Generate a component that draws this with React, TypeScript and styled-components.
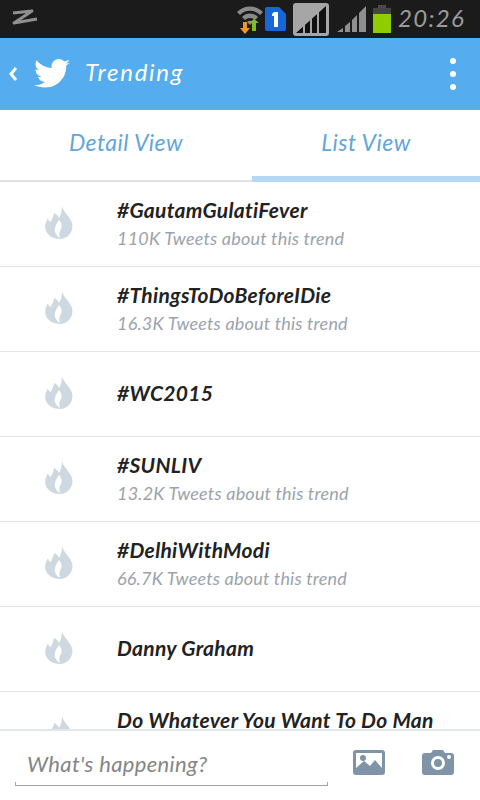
import React from 'react';
import styled, { createGlobalStyle } from 'styled-components';

const GlobalStyle = createGlobalStyle`
  html, body {
    margin: 0;
    padding: 0;
    background: #fff;
  }
  * {
    box-sizing: border-box;
  }
`;

const HAND = `"Lato", "Noto Sans", sans-serif`;

const Screen = styled.div`
  width: 480px;
  height: 800px;
  display: flex;
  flex-direction: column;
  overflow: hidden;
  background: #fff;
  font-family: ${HAND};
  font-style: italic;
`;

const StatusBar = styled.div`
  height: 38px;
  flex: none;
  display: flex;
  align-items: center;
  padding: 0 15px 0 10px;
  background: #1b1b1b;
`;

const StatusIcons = styled.div`
  margin-left: auto;
  display: flex;
  align-items: center;
`;

const StatusIcon = styled.svg<{ $gap?: number }>`
  margin-left: ${({ $gap }) => $gap ?? 0}px;
`;

const Clock = styled.span`
  margin: 0 0 4px 7px;
  width: 67px;
  color: #9b9b9b;
  font-size: 24px;
  letter-spacing: 1.3px;
  white-space: nowrap;
`;

const Header = styled.div`
  height: 72px;
  flex: none;
  display: flex;
  align-items: center;
  padding: 0 24px 0 8px;
  background: #55acee;
  color: #fff;
`;

const Bird = styled.svg`
  margin-left: 15px;
`;

const HeaderTitle = styled.span`
  margin: 0 0 6px 15px;
  font-size: 24px;
  letter-spacing: 1.7px;
`;

const MenuDots = styled.div`
  margin-left: auto;
  display: flex;
  flex-direction: column;
  gap: 7px;
`;

const Dot = styled.span`
  width: 6px;
  height: 6px;
  border-radius: 50%;
  background: #fff;
`;

const Tabs = styled.div`
  height: 72px;
  flex: none;
  display: flex;
  border-bottom: 2px solid #e2e2e2;
`;

const Tab = styled.div<{ $active?: boolean }>`
  width: ${({ $active }) => ($active ? '228px' : '252px')};
  display: flex;
  align-items: center;
  justify-content: center;
  margin-bottom: ${({ $active }) => ($active ? '-2px' : '0')};
  padding-bottom: ${({ $active }) => ($active ? '3px' : '7px')};
  border-bottom: ${({ $active }) => ($active ? '6px solid #b5d8f4' : 'none')};
  color: #62a6db;
  font-size: 23px;
  letter-spacing: 0.45px;
`;

const List = styled.div`
  flex: 1;
  min-height: 0;
  overflow: hidden;
`;

const Row = styled.div`
  height: 85px;
  display: flex;
  border-bottom: 1px solid #e4e4e4;
`;

const FlameCell = styled.div`
  width: 117px;
  flex: none;
  padding: 24px 0 0 45px;
`;

const RowText = styled.div<{ $single?: boolean }>`
  padding-top: ${({ $single }) => ($single ? '27px' : '14px')};
  min-width: 0;
`;

const RowTitle = styled.div`
  height: 29px;
  line-height: 27px;
  color: #222;
  font-size: 21px;
  font-weight: 700;
  letter-spacing: 0.3px;
  white-space: nowrap;
`;

const RowSub = styled.div`
  height: 27px;
  line-height: 27px;
  color: #9aa3ab;
  font-size: 18px;
  letter-spacing: 0.2px;
  white-space: nowrap;
`;

const Composer = styled.div`
  height: 71px;
  flex: none;
  display: flex;
  align-items: flex-start;
  padding: 0 26px 0 15px;
  border-top: 2px solid #e1e8ed;
`;

const InputBox = styled.div`
  width: 313px;
  height: 55px;
  padding: 19px 0 0 11px;
  border: 1px solid #a3a3a3;
  border-top: none;
  border-image: linear-gradient(to bottom, transparent 92%, #a3a3a3 92%) 1;
  color: #858585;
  font-size: 22px;
  letter-spacing: 0.35px;
`;

const ComposerActions = styled.div`
  margin-left: auto;
  padding-top: 19px;
  display: flex;
  align-items: center;
  gap: 37px;
`;

const Flame = () => (
  <svg width="28" height="33" viewBox="0 0 28 33">
    <path
      fill="#cdd8e0"
      fillRule="evenodd"
      d="M17 0c1 5 5 8 8 13 3 4 3 9 1 13-2 4-6 7-11 7-6 0-12-3-14-8-2-5 0-9 2-13 0 2 1 3 3 4 1-4 3-6 3-9 3 1 4 3 5 5 2-3 3-7 3-12zM14 14c-3 4-5 8-4 12 1 3 3 5 5 6-1-3-1-6 1-9 1-2 1-6-2-9z"
    />
  </svg>
);

const rows = [
  { title: '#GautamGulatiFever', sub: '110K Tweets about this trend' },
  { title: '#ThingsToDoBeforeIDie', sub: '16.3K Tweets about this trend' },
  { title: '#WC2015', single: true },
  { title: '#SUNLIV', sub: '13.2K Tweets about this trend' },
  { title: '#DelhiWithModi', sub: '66.7K Tweets about this trend' },
  { title: 'Danny Graham', single: true },
  { title: 'Do Whatever You Want To Do Man' },
];

const App = () => (
  <Screen>
    <GlobalStyle />
    <StatusBar>
      <svg width="30" height="20" viewBox="0 0 30 20">
        <path
          d="M3 4 L22 2 L4 14 L27 10"
          fill="none"
          stroke="#8f8f8f"
          strokeWidth="3"
          strokeLinejoin="round"
        />
      </svg>
      <StatusIcons>
        <StatusIcon width="26" height="30" viewBox="0 0 26 30">
          <path d="M0 8 A 18 18 0 0 1 26 8 L23 11 A 14 14 0 0 0 3 11 Z" fill="#8a8a8a" />
          <path d="M5 13 A 11 11 0 0 1 21 13 L18 16 A 7 7 0 0 0 8 16 Z" fill="#8a8a8a" />
          <path d="M10 18 A 4 4 0 0 1 16 18 L13 21 Z" fill="#8a8a8a" />
          <path d="M6 18h4v6h3l-5 6-5-6h3z" fill="#f0962a" />
          <path d="M15 27v-8h-3l5-4 5 4h-3v8z" fill="#7fbb2c" />
        </StatusIcon>
        <StatusIcon $gap={1} width="22" height="26" viewBox="0 0 22 26">
          <path d="M1 3 Q1 1 3 1 H15 L22 8 V23 Q22 25 20 25 H3 Q1 25 1 23 Z" fill="#1668d8" />
          <path d="M10 6h4v15h-4V10H8V8z" fill="#fff" />
        </StatusIcon>
        <StatusIcon $gap={7} width="36" height="33" viewBox="0 0 36 33">
          <rect x="0" y="0" width="36" height="33" rx="3" fill="#a6a6a6" />
          <path d="M3 30 L33 3 V30 Z" fill="#111" />
          <path d="M11 30V22M18 30V16M25 30V9" stroke="#a6a6a6" strokeWidth="2" />
        </StatusIcon>
        <StatusIcon $gap={8} width="29" height="28" viewBox="0 0 29 28">
          <path d="M0 27 L6 23 V27 Z M8 21 L13 17 V27 H8 Z M15 15 L20 10 V27 H15 Z M22 8 L29 1 V27 H22 Z" fill="#8f8f8f" />
        </StatusIcon>
        <StatusIcon $gap={7} width="18" height="28" viewBox="0 0 18 28">
          <rect x="5" y="0" width="8" height="3" fill="#4a4a4a" />
          <rect x="0" y="3" width="18" height="25" fill="#444" />
          <rect x="0" y="9" width="18" height="19" fill="#8fcc00" />
        </StatusIcon>
        <Clock>20:26</Clock>
      </StatusIcons>
    </StatusBar>

    <Header>
      <svg width="11" height="16" viewBox="0 0 11 16">
        <path d="M8 2 L3 8 L8 14" fill="none" stroke="#fff" strokeWidth="3" />
      </svg>
      <Bird width="36" height="30" viewBox="0 0 24 20">
        <path
          fill="#fff"
          d="M24 2.4c-.9.4-1.8.7-2.8.8 1-.6 1.8-1.6 2.200-2.700-1 .6-2 1-3.100 1.200C19.300.7 18 0 16.600 0c-2.700 0-4.900 2.200-4.900 4.900 0 .4 0 .8.100 1.100C7.700 5.800 4.100 3.900 1.700.9c-.4.700-.7 1.600-.7 2.500 0 1.700.9 3.200 2.200 4.100-.8 0-1.600-.2-2.200-.6v.1c0 2.400 1.700 4.400 3.900 4.800-.4.100-.8.200-1.300.2-.3 0-.6 0-.9-.1.600 2 2.400 3.400 4.600 3.400-1.700 1.300-3.800 2.100-6.100 2.100-.4 0-.8 0-1.200-.1C2.200 18.200 4.800 19 7.500 19c9.100 0 14-7.500 14-14v-.6c1-.7 1.800-1.500 2.500-2z"
        />
      </Bird>
      <HeaderTitle>Trending</HeaderTitle>
      <MenuDots>
        <Dot />
        <Dot />
        <Dot />
      </MenuDots>
    </Header>

    <Tabs>
      <Tab>Detail View</Tab>
      <Tab $active>List View</Tab>
    </Tabs>

    <List>
      {rows.map((row) => (
        <Row key={row.title}>
          <FlameCell>
            <Flame />
          </FlameCell>
          <RowText $single={row.single}>
            <RowTitle>{row.title}</RowTitle>
            {row.sub && <RowSub>{row.sub}</RowSub>}
          </RowText>
        </Row>
      ))}
    </List>

    <Composer>
      <InputBox>What's happening?</InputBox>
      <ComposerActions>
        <svg width="32" height="25" viewBox="0 0 32 25">
          <path
            fill="#7f94a6"
            fillRule="evenodd"
            d="M3 0h26a3 3 0 0 1 3 3v19a3 3 0 0 1-3 3H3a3 3 0 0 1-3-3V3a3 3 0 0 1 3-3zM3 3v15l8-7 6 5 5-6 7 8V3zM13 8a3 3 0 1 1-6 0 3 3 0 0 1 6 0z"
          />
        </svg>
        <svg width="32" height="25" viewBox="0 0 32 25">
          <path
            fill="#7f94a6"
            fillRule="evenodd"
            d="M3 3h6l2-3h10l2 3h6a3 3 0 0 1 3 3v16a3 3 0 0 1-3 3H3a3 3 0 0 1-3-3V6a3 3 0 0 1 3-3zM16 6a7 7 0 1 0 0 14 7 7 0 0 0 0-14zM16 9a4 4 0 1 1 0 8 4 4 0 0 1 0-8zM27 5a2 2 0 1 0 0 4 2 2 0 0 0 0-4z"
          />
        </svg>
      </ComposerActions>
    </Composer>
  </Screen>
);

export default App;
